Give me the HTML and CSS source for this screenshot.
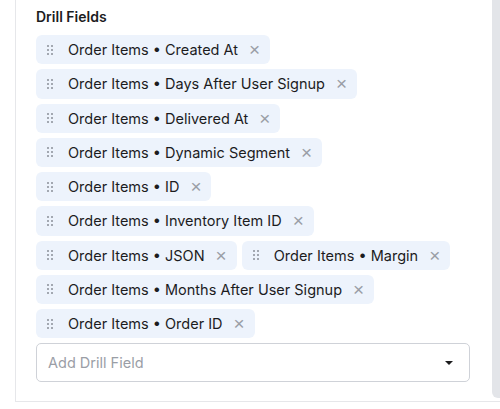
FILE: index.html
```html
<!DOCTYPE html>
<html>
<head>
<meta charset="utf-8">
<link rel="stylesheet" href="styles.css">
</head>
<body>
<div class="frame">
  <div class="content">
    <div class="title">Drill Fields</div>
    <div class="chips">
      <div class="chip"><span class="grip"><i></i><i></i><i></i><i></i><i></i><i></i></span><span class="label">Order Items • Created At</span><span class="x">×</span></div>
      <div class="chip"><span class="grip"><i></i><i></i><i></i><i></i><i></i><i></i></span><span class="label">Order Items • Days After User Signup</span><span class="x">×</span></div>
      <div class="chip"><span class="grip"><i></i><i></i><i></i><i></i><i></i><i></i></span><span class="label">Order Items • Delivered At</span><span class="x">×</span></div>
      <div class="chip"><span class="grip"><i></i><i></i><i></i><i></i><i></i><i></i></span><span class="label">Order Items • Dynamic Segment</span><span class="x">×</span></div>
      <div class="chip"><span class="grip"><i></i><i></i><i></i><i></i><i></i><i></i></span><span class="label">Order Items • ID</span><span class="x">×</span></div>
      <div class="chip"><span class="grip"><i></i><i></i><i></i><i></i><i></i><i></i></span><span class="label">Order Items • Inventory Item ID</span><span class="x">×</span></div>
      <div class="chip"><span class="grip"><i></i><i></i><i></i><i></i><i></i><i></i></span><span class="label">Order Items • JSON</span><span class="x">×</span></div>
      <div class="chip"><span class="grip"><i></i><i></i><i></i><i></i><i></i><i></i></span><span class="label">Order Items • Margin</span><span class="x">×</span></div>
      <div class="chip"><span class="grip"><i></i><i></i><i></i><i></i><i></i><i></i></span><span class="label">Order Items • Months After User Signup</span><span class="x">×</span></div>
      <div class="chip"><span class="grip"><i></i><i></i><i></i><i></i><i></i><i></i></span><span class="label">Order Items • Order ID</span><span class="x">×</span></div>
    </div>
    <div class="select">
      <span class="placeholder">Add Drill Field</span>
      <span class="caret"></span>
    </div>
  </div>
  <div class="scroll"></div>
</div>
</body>
</html>
```
FILE: styles.css
```css
html, body {
  margin: 0;
  padding: 0;
  background: #ffffff;
}
body {
  font-family: Inter, "Liberation Sans", sans-serif;
  color: #1c1c1e;
}
.frame {
  display: flex;
  margin-left: 15px;
  height: 402px;
  border-left: 1px solid #e6e7ea;
  border-bottom: 1px solid #e6e7ea;
  box-sizing: border-box;
}
.content {
  flex: 1;
  padding: 7px 22px 0 20px;
}
.title {
  font-size: 14px;
  font-weight: 600;
  line-height: 20px;
  margin-bottom: 8px;
}
.chips {
  display: flex;
  flex-wrap: wrap;
  gap: 5px;
}
.chip {
  display: flex;
  align-items: center;
  height: 29.25px;
  padding: 0 10px 0 11px;
  background: #edf3fc;
  border-radius: 6px;
  font-size: 14.5px;
}
.grip {
  display: grid;
  grid-template-columns: 2px 2px;
  column-gap: 2px;
  row-gap: 2px;
  margin-right: 15px;
}
.grip i {
  width: 2px;
  height: 2px;
  background: #8a8f98;
  border-radius: 1px;
}
.label {
  white-space: nowrap;
}
.x {
  color: #9a9ea6;
  font-family: "Liberation Sans", sans-serif;
  font-size: 19px;
  line-height: 1;
  margin-left: 11px;
}
.select {
  margin-top: 5px;
  height: 39px;
  border: 1px solid #cfd2d8;
  border-radius: 5px;
  box-sizing: border-box;
  display: flex;
  align-items: center;
  justify-content: space-between;
  padding: 0 16px 0 11px;
}
.placeholder {
  color: #9a9ea6;
  font-size: 14.5px;
}
.caret {
  width: 0;
  height: 0;
  border-left: 4px solid transparent;
  border-right: 4px solid transparent;
  border-top: 4px solid #1c1c1e;
}
.scroll {
  width: 8px;
  height: 398px;
  background: #e3e5e9;
  border-radius: 0 0 0 6px;
}
```
